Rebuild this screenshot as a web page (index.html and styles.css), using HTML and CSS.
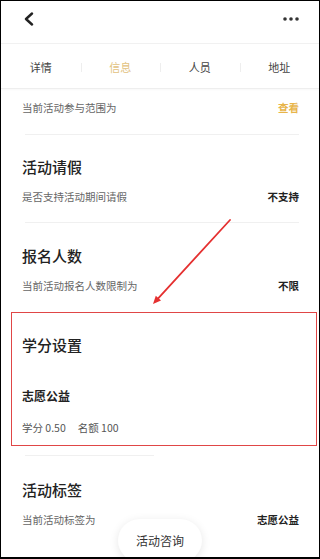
FILE: index.html
```html
<!DOCTYPE html>
<html lang="zh-CN">
<head>
<meta charset="utf-8">
<title>活动信息</title>
<link rel="stylesheet" href="styles.css">
</head>
<body>
<div class="frame">
  <header class="header">
    <svg class="back" width="12" height="14" viewBox="0 0 12 14"><polyline points="9,1.5 3,7 9,12.5" fill="none" stroke="#222" stroke-width="2.4" stroke-linecap="round" stroke-linejoin="round"/></svg>
    <svg class="more" width="16" height="6" viewBox="0 0 16 6"><circle cx="2" cy="3" r="1.8" fill="#333"/><circle cx="8" cy="3" r="1.8" fill="#333"/><circle cx="14" cy="3" r="1.8" fill="#333"/></svg>
  </header>
  <nav class="tabs">
    <div class="tab">详情</div>
    <div class="tab active">信息</div>
    <div class="tab">人员</div>
    <div class="tab">地址</div>
  </nav>
  <main class="content">
    <div class="row first"><span class="label">当前活动参与范围为</span><span class="link">查看</span></div>
    <div class="divider"></div>
    <h2 class="title">活动请假</h2>
    <div class="row"><span class="label">是否支持活动期间请假</span><span class="value">不支持</span></div>
    <div class="divider d2"></div>
    <h2 class="title">报名人数</h2>
    <div class="row"><span class="label">当前活动报名人数限制为</span><span class="value">不限</span></div>
    <h2 class="title credit">学分设置</h2>
    <div class="cat">志愿公益</div>
    <div class="meta"><span>学分 0.50</span><span>名额 100</span></div>
    <div class="divider short"></div>
    <h2 class="title t4">活动标签</h2>
    <div class="row"><span class="label">当前活动标签为</span><span class="value">志愿公益</span></div>
  </main>
  <div class="highlight"></div>
  <svg class="arrow" width="318" height="557" viewBox="0 0 318 557">
    <line x1="229" y1="219" x2="157.4" y2="297.1" stroke="#e53030" stroke-width="1.8" stroke-linecap="round"/>
    <polygon points="152,303 160,299.5 154.8,294.7" fill="#e53030"/>
  </svg>
  <button class="consult">活动咨询</button>
</div>
</body>
</html>
```
FILE: styles.css
```css
* { box-sizing: border-box; }
html, body { margin: 0; padding: 0; background: #fff; }
body { font-family: "Noto Sans CJK SC", "Noto Sans", sans-serif; }
.frame {
  position: relative;
  width: 320px;
  height: 559px;
  border: 1px solid #000;
  border-bottom-width: 2px;
  overflow: hidden;
  background: #fff;
}
.header {
  height: 43px;
  padding: 0 22px 6px 22px;
  display: flex;
  align-items: center;
  justify-content: space-between;
  border-bottom: 1px solid #f1f1f1;
}
.header .back { display: block; margin-left: 0; }
.header .more { display: block; margin-right: -2px; }
.tabs {
  height: 45px;
  display: grid;
  grid-template-columns: repeat(4, 1fr);
  border-bottom: 1px solid #eeeeee;
  box-shadow: 0 1px 2px rgba(0,0,0,0.03);
}
.tab {
  position: relative;
  display: flex;
  align-items: center;
  justify-content: center;
  font-size: 11px;
  color: #444;
  padding-top: 2px;
}
.tab + .tab::before {
  content: "";
  position: absolute;
  left: 0;
  top: 19px;
  height: 9px;
  border-left: 1px solid #eeeeee;
}
.tab.active { color: #e2c281; }
.content { padding: 0 20px 0 21px; }
.row {
  display: flex;
  justify-content: space-between;
  align-items: center;
  height: 16px;
  margin-top: 11px;
  font-size: 10.5px;
}
.row.first { margin-top: 10px; }
.label { color: #666; }
.value { color: #222; font-weight: 700; }
.link { color: #e8b54a; font-weight: 700; }
.divider {
  height: 1px;
  background: #f0f0f0;
  margin: 19px 0 0 3px;
}
.divider.d2 { margin-top: 18px; }
.divider.short { width: 129px; margin-top: 19px; }
.title {
  margin: 22px 0 0 0;
  font-size: 15px;
  line-height: 20px;
  font-weight: 500;
  color: #222;
}
.d2 + .title { margin-top: 23px; }
.title.credit { margin-top: 42px; }
.title.t4 { margin-top: 24px; }
.cat {
  margin-top: 32px;
  font-size: 12px;
  line-height: 18px;
  font-weight: 700;
  color: #222;
}
.meta {
  margin-top: 15px;
  display: flex;
  gap: 12px;
  font-size: 10.5px;
  line-height: 16px;
  color: #555;
}
.highlight {
  position: absolute;
  left: 10px;
  top: 311px;
  width: 306px;
  height: 134px;
  border: 1.5px solid #e04646;
}
.arrow { position: absolute; left: 0; top: 0; pointer-events: none; }
.consult {
  position: absolute;
  left: 117px;
  top: 518px;
  width: 84px;
  height: 43px;
  border: none;
  border-radius: 22px;
  background: #fff;
  box-shadow: 0 2px 10px rgba(0,0,0,0.1);
  font-family: "Noto Sans CJK SC", sans-serif;
  font-size: 12px;
  color: #333;
  padding: 0 0 1px 0;
}
```
